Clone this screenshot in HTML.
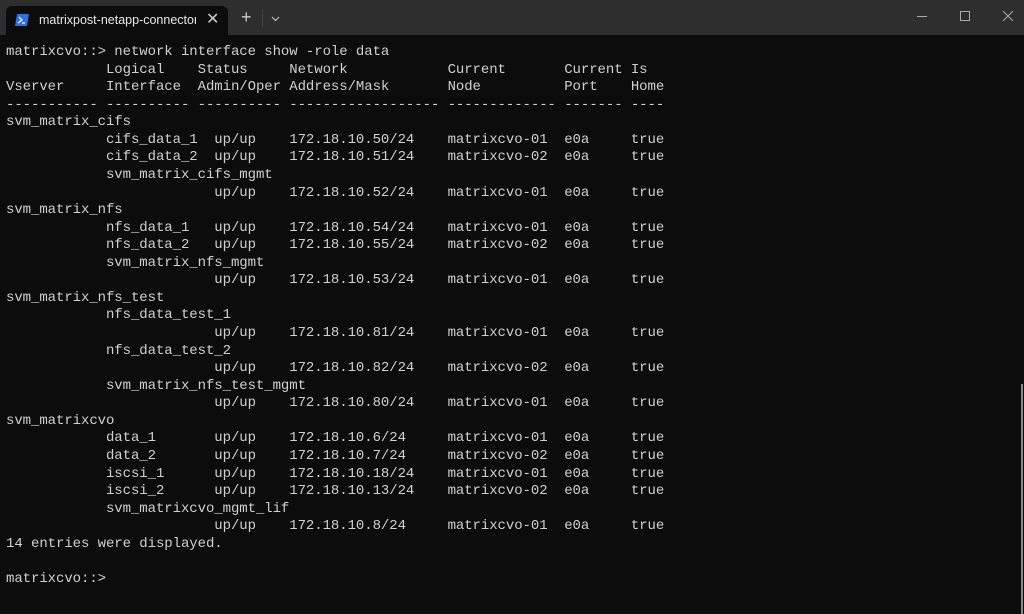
<!DOCTYPE html>
<html><head><style>
body{margin:0;width:1024px;height:614px;background:#0c0c0c;overflow:hidden;position:relative;font-family:"Liberation Sans",sans-serif}
.bar{position:absolute;left:0;top:0;width:1024px;height:35px;background:#2e2e2e}
.tab{position:absolute;left:6px;top:6px;width:222px;height:29px;background:#0c0c0c;border-radius:6px 6px 0 0}
.tab .t{position:absolute;left:33px;top:7px;color:#e8e8e8;font-size:12.5px;white-space:nowrap;width:157px;overflow:hidden}
.tab .x{position:absolute;left:200px;top:3px;color:#ccc;font-size:16px}
pre{position:absolute;left:6px;top:44px;margin:0;font-family:"Liberation Mono",monospace;font-size:14px;letter-spacing:-0.07px;line-height:17.57px;color:#d0d0d0}
.sb{position:absolute;left:1021px;top:384px;width:2px;height:230px;background:#8a8a8a}
</style></head><body>
<div class="bar">
<div class="tab">
<svg style="position:absolute;left:9px;top:8px" width="14" height="12" viewBox="0 0 14 12"><path d="M2 0H14L12 12H0Z" fill="#2f6fe0"/><path d="M4 3L7 6L3 9M7 9H10" stroke="#fff" stroke-width="1.2" fill="none"/></svg>
<div class="t">matrixpost-netapp-connector</div><div class="x">✕</div></div>
<div style="position:absolute;left:241px;top:7px;color:#ccc;font-size:18px">+</div>
<div style="position:absolute;left:262px;top:9px;width:1px;height:18px;background:#444"></div>
<svg style="position:absolute;left:271px;top:16px" width="9" height="6"><path d="M1 1L4.5 4.5L8 1" stroke="#ccc" fill="none"/></svg>
<div style="position:absolute;left:917px;top:16px;width:10px;height:1px;background:#aaa"></div>
<div style="position:absolute;left:960px;top:11px;width:8px;height:8px;border:1px solid #aaa"></div>
<svg style="position:absolute;left:1003px;top:11px" width="10" height="10"><path d="M0 0L10 10M10 0L0 10" stroke="#aaa"/></svg>
</div>
<pre>matrixcvo::> network interface show -role data
            Logical    Status     Network            Current       Current Is
Vserver     Interface  Admin/Oper Address/Mask       Node          Port    Home
----------- ---------- ---------- ------------------ ------------- ------- ----
svm_matrix_cifs
            cifs_data_1  up/up    172.18.10.50/24    matrixcvo-01  e0a     true
            cifs_data_2  up/up    172.18.10.51/24    matrixcvo-02  e0a     true
            svm_matrix_cifs_mgmt
                         up/up    172.18.10.52/24    matrixcvo-01  e0a     true
svm_matrix_nfs
            nfs_data_1   up/up    172.18.10.54/24    matrixcvo-01  e0a     true
            nfs_data_2   up/up    172.18.10.55/24    matrixcvo-02  e0a     true
            svm_matrix_nfs_mgmt
                         up/up    172.18.10.53/24    matrixcvo-01  e0a     true
svm_matrix_nfs_test
            nfs_data_test_1
                         up/up    172.18.10.81/24    matrixcvo-01  e0a     true
            nfs_data_test_2
                         up/up    172.18.10.82/24    matrixcvo-02  e0a     true
            svm_matrix_nfs_test_mgmt
                         up/up    172.18.10.80/24    matrixcvo-01  e0a     true
svm_matrixcvo
            data_1       up/up    172.18.10.6/24     matrixcvo-01  e0a     true
            data_2       up/up    172.18.10.7/24     matrixcvo-02  e0a     true
            iscsi_1      up/up    172.18.10.18/24    matrixcvo-01  e0a     true
            iscsi_2      up/up    172.18.10.13/24    matrixcvo-02  e0a     true
            svm_matrixcvo_mgmt_lif
                         up/up    172.18.10.8/24     matrixcvo-01  e0a     true
14 entries were displayed.

matrixcvo::>
</pre>
<div class="sb"></div>
</body></html>
